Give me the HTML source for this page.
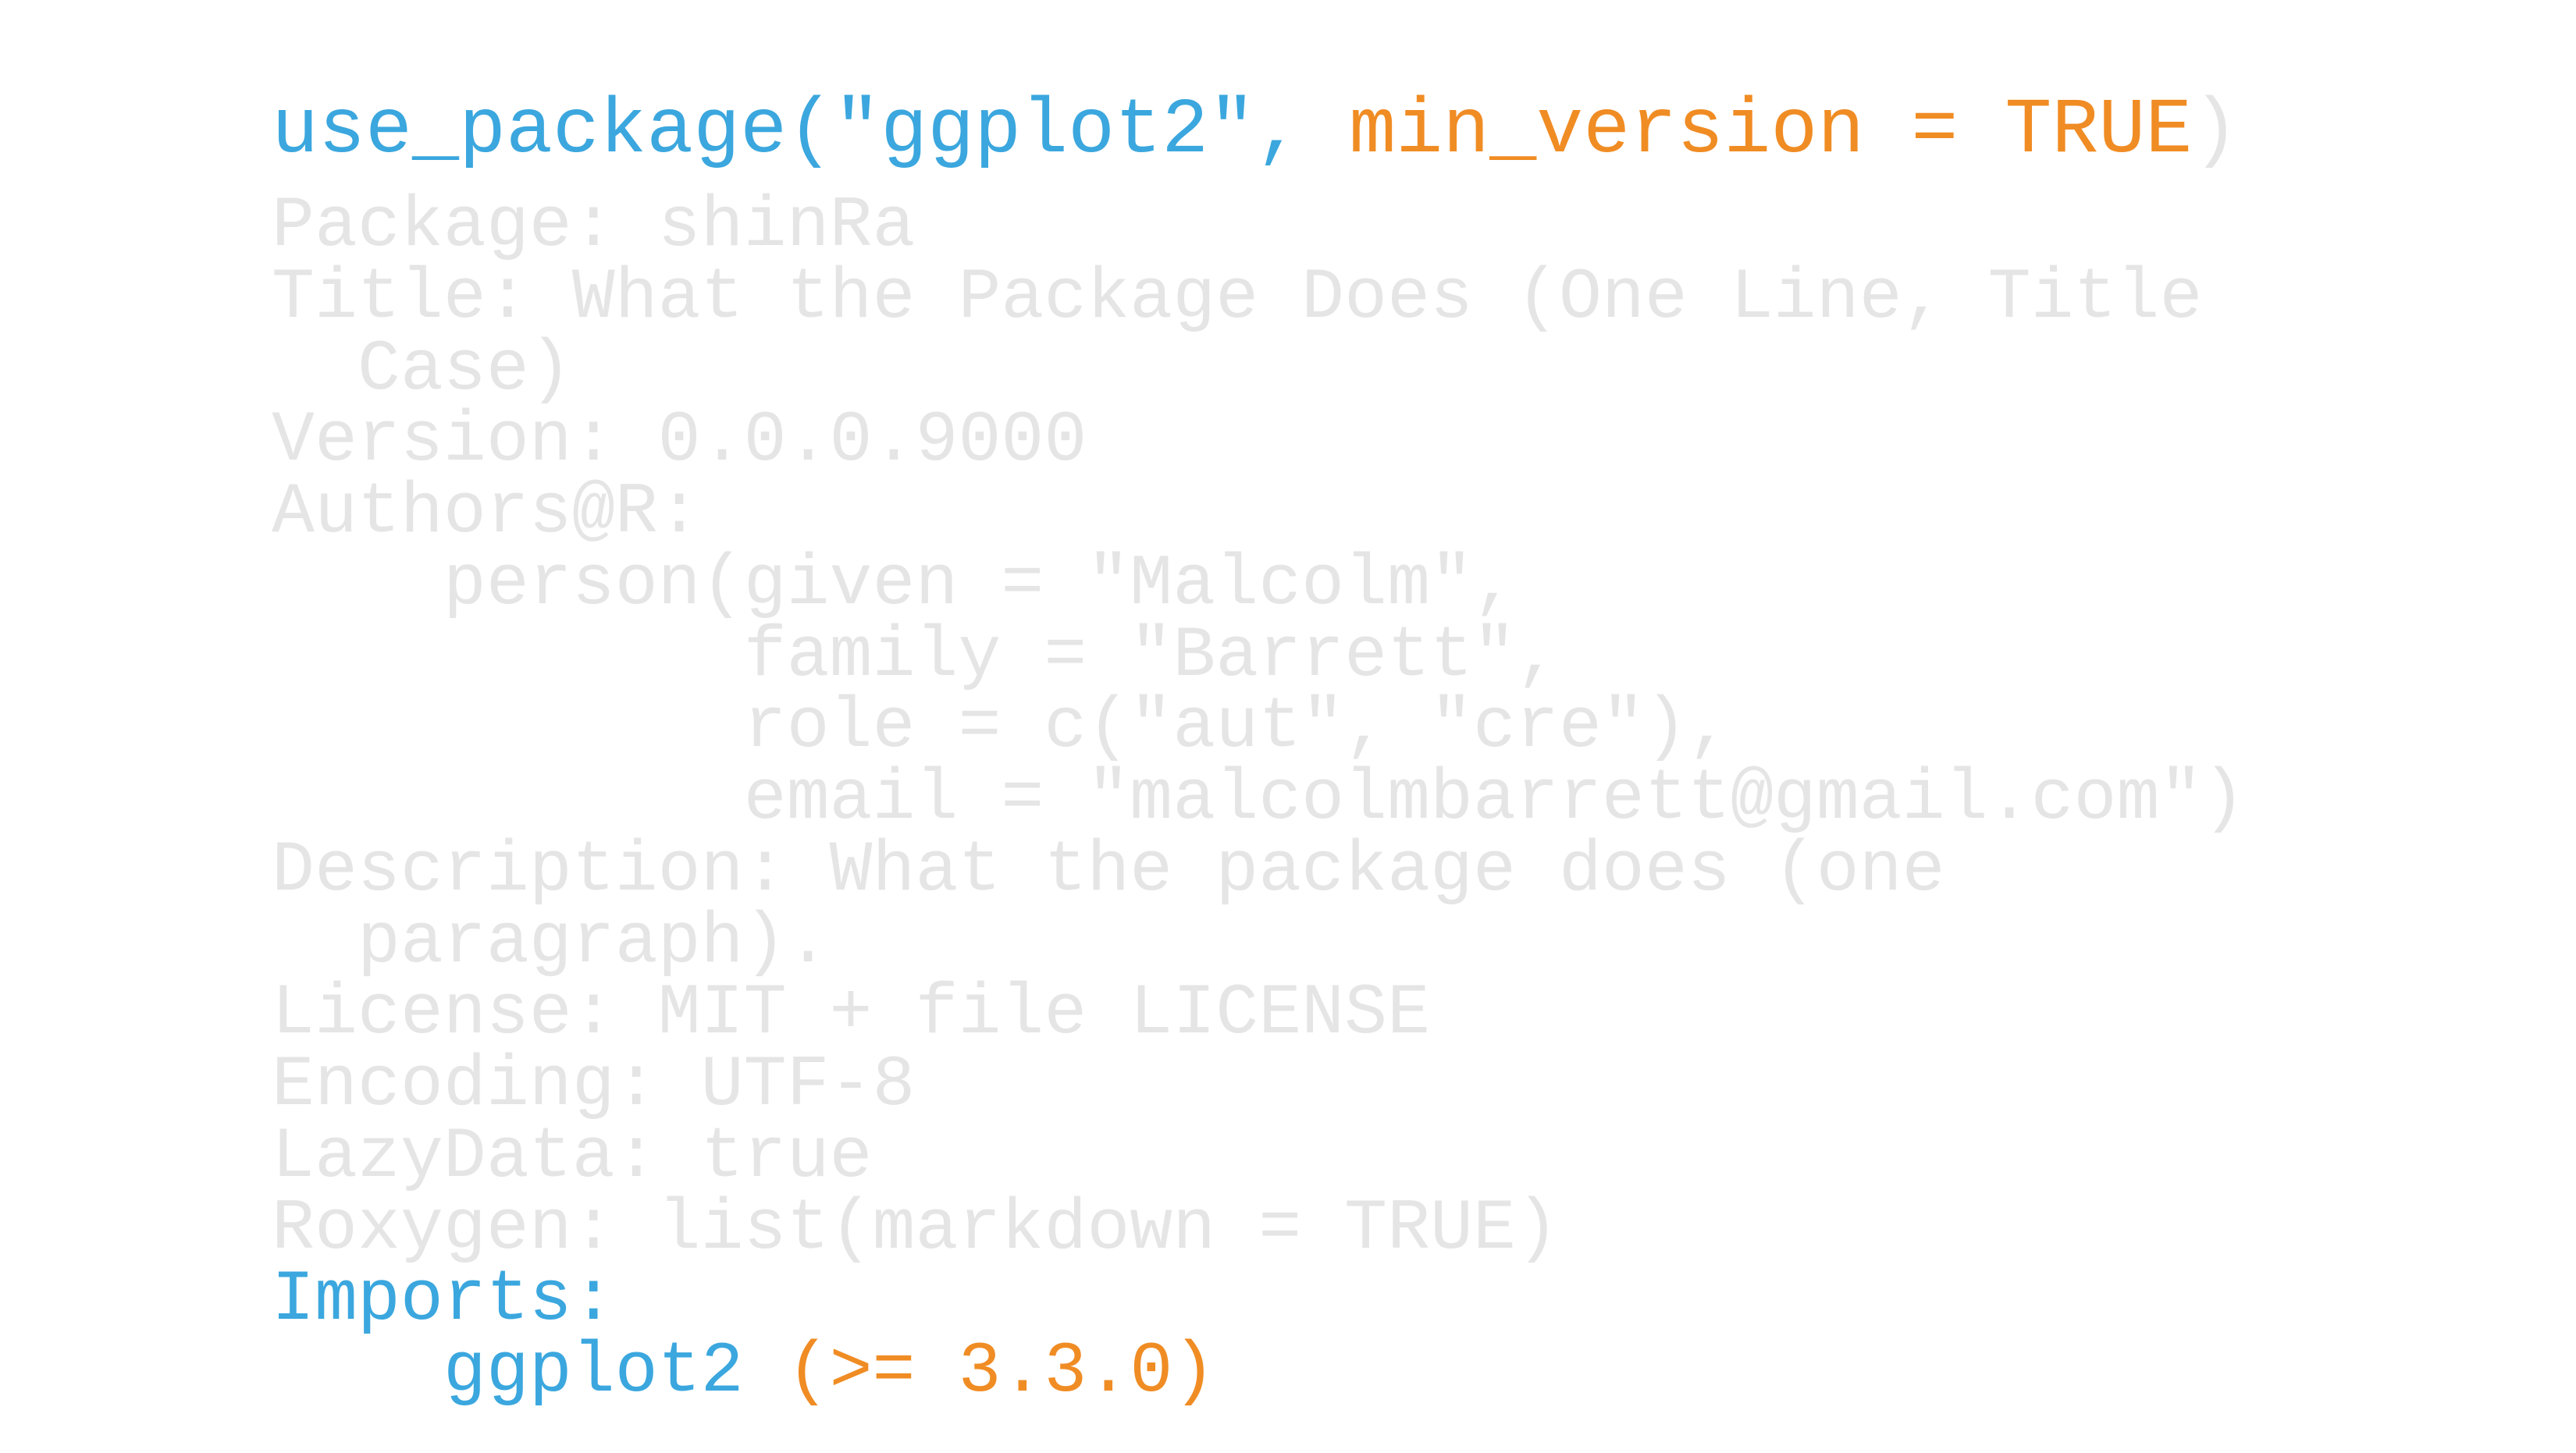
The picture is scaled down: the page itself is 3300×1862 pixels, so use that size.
<!DOCTYPE html>
<html><head><meta charset="utf-8"><style>
html,body{margin:0;padding:0;background:#fff;width:3300px;height:1862px;overflow:hidden}
.l{position:absolute;left:348px;font-family:"Liberation Mono",monospace;white-space:pre;line-height:91.75px;color:#e5e5e5}
.b{color:#3ba7de}.o{color:#f08c24}
</style></head><body>
<div class="l" style="top:123px;font-size:100px;line-height:92px"><span class="b">use_package("ggplot2", </span><span class="o">min_version = TRUE</span>)</div>
<div class="l" style="top:245px;font-size:91.6px">Package: shinRa
Title: What the Package Does (One Line, Title
  Case)
Version: 0.0.0.9000
Authors@R: 
    person(given = "Malcolm",
           family = "Barrett",
           role = c("aut", "cre"),
           email = "malcolmbarrett@gmail.com")
Description: What the package does (one
  paragraph).
License: MIT + file LICENSE
Encoding: UTF-8
LazyData: true
Roxygen: list(markdown = TRUE)
<span class="b">Imports:</span>
    <span class="b">ggplot2</span> <span class="o">(&gt;= 3.3.0)</span></div>
</body></html>
